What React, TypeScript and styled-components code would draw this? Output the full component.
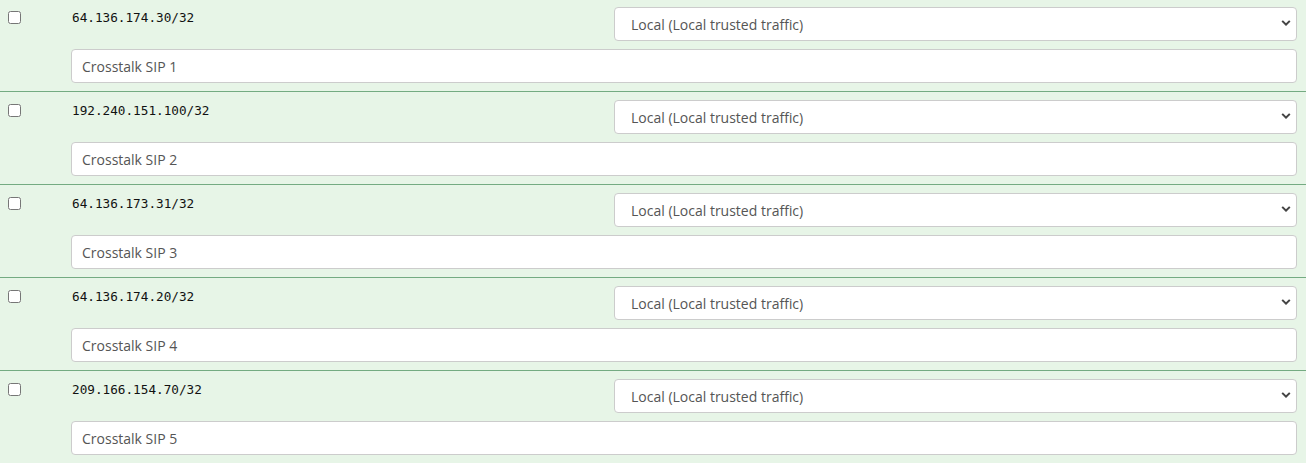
import styled, {createGlobalStyle} from "styled-components";

const GlobalStyle = createGlobalStyle`
  html, body {
    margin: 0;
    padding: 0;
    background: #e7f5e7;
  }
  body {
    font-family: "Open Sans", "Liberation Sans", sans-serif;
    overflow: hidden;
  }
`;

const List = styled.div`
  margin-top: -1px;
`;

const Row = styled.div`
  display: grid;
  grid-template-columns: 63px 1fr 683px;
  grid-template-rows: 34px 34px;
  row-gap: 8px;
  padding: 8px 9px 8px 8px;
  background: #e7f5e7;
  border-bottom: 1px solid #74ab82;
`;

const Check = styled.input`
  width: 13px;
  height: 13px;
  margin: 4px 0 0 0;
  accent-color: #0075ff;
`;

const Address = styled.div`
  font-family: "DejaVu Sans Mono", "Liberation Mono", monospace;
  font-size: 12.7px;
  line-height: 16px;
  color: #111;
  padding: 3px 0 0 1px;
`;

const SelectWrap = styled.div`
  position: relative;
`;

const Select = styled.select`
  appearance: none;
  width: 100%;
  height: 34px;
  box-sizing: border-box;
  padding: 0 32px 0 16px;
  border: 1px solid #cccccc;
  border-radius: 4px;
  background: #fff;
  font-family: "Open Sans", "Liberation Sans", sans-serif;
  font-size: 14px;
  color: #555;
  outline: none;
`;

const Chevron = styled.svg`
  position: absolute;
  right: 6px;
  top: 13px;
  width: 10px;
  height: 7px;
  pointer-events: none;
`;

const Description = styled.input`
  grid-column: 2 / 4;
  height: 34px;
  box-sizing: border-box;
  padding: 0 10px;
  border: 1px solid #cccccc;
  border-radius: 4px;
  background: #fff;
  font-family: "Open Sans", "Liberation Sans", sans-serif;
  font-size: 14px;
  color: #555;
  outline: none;
`;

const entries = [
    {ip: "64.136.174.30/32", name: "Crosstalk SIP 1"},
    {ip: "192.240.151.100/32", name: "Crosstalk SIP 2"},
    {ip: "64.136.173.31/32", name: "Crosstalk SIP 3"},
    {ip: "64.136.174.20/32", name: "Crosstalk SIP 4"},
    {ip: "209.166.154.70/32", name: "Crosstalk SIP 5"},
];

function App() {
    return (
        <>
            <GlobalStyle/>
            <List>
                {entries.map(entry => (
                    <Row key={entry.ip}>
                        <div>
                            <Check type="checkbox"/>
                        </div>
                        <Address>{entry.ip}</Address>
                        <SelectWrap>
                            <Select defaultValue="local">
                                <option value="local">Local (Local trusted traffic)</option>
                            </Select>
                            <Chevron viewBox="0 0 10 7">
                                <path d="M0.5 1.6 L1.9 0.2 L5 3.3 L8.1 0.2 L9.5 1.6 L5 6.1 Z" fill="#444"/>
                            </Chevron>
                        </SelectWrap>
                        <Description defaultValue={entry.name}/>
                    </Row>
                ))}
            </List>
        </>
    );
}

export default App;
